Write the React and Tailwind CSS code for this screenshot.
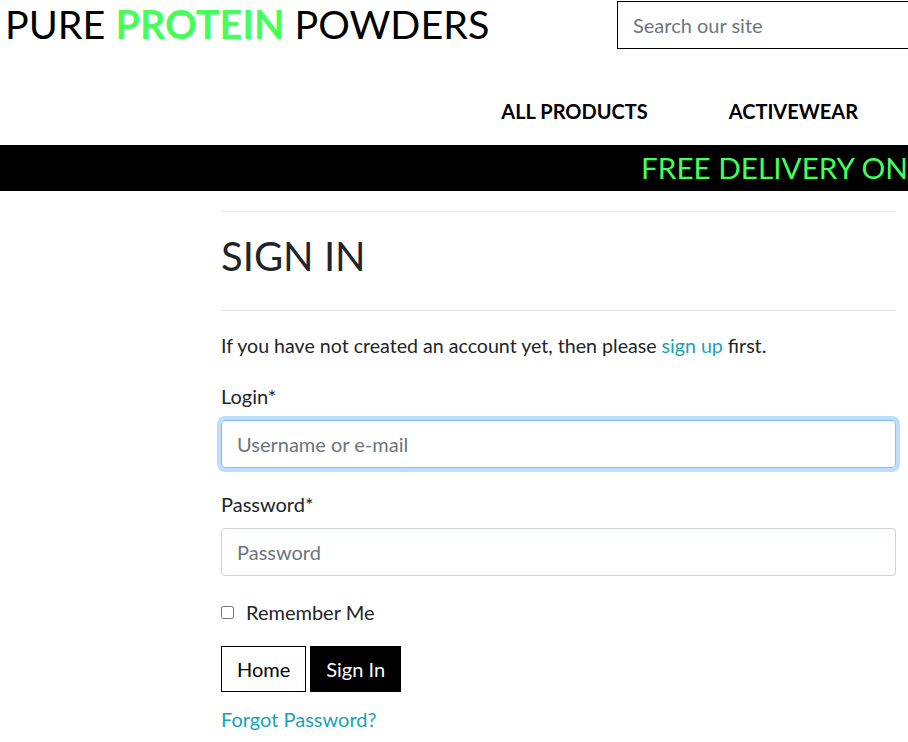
export default function App() {
  return (
    <div className="w-[908px] min-h-[742px] overflow-hidden bg-white font-['Lato','Noto_Sans',sans-serif] text-[#212529]">
      <header className="flex items-start justify-between">
        <h1 className="ml-[5px] whitespace-nowrap text-[39.5px] font-normal leading-[48px] text-black">
          PURE <span className="font-bold text-[#44ff5a]">PROTEIN</span> POWDERS
        </h1>
        <input
          type="text"
          placeholder="Search our site"
          className="mt-px h-[48px] w-[320px] shrink-0 -mr-[29px] border border-black px-[15px] text-[20px] text-[#495057] placeholder:text-[#6c757d] outline-none"
        />
      </header>
      <nav className="flex h-[96px] items-center justify-end gap-[81px] pr-[50px] pt-[27px]">
        <a className="text-[20px] font-bold text-black">ALL PRODUCTS</a>
        <a className="text-[20px] font-bold text-black">ACTIVEWEAR</a>
      </nav>
      <div className="flex h-[46px] items-center overflow-hidden bg-black">
        <span className="ml-[641px] whitespace-nowrap text-[29.7px] leading-none text-[#44ff5a]">
          FREE DELIVERY ON ORDERS
        </span>
      </div>
      <main className="ml-[221px] w-[675px]">
        <hr className="mt-[20px] border-t border-[#e5e5e5]" />
        <h2 className="mt-[20px] text-[40px] font-normal leading-[48px]">SIGN IN</h2>
        <hr className="mt-[30px] border-t border-[#e5e5e5]" />
        <p className="mt-[20px] text-[19.6px] leading-[30px]">
          If you have not created an account yet, then please{" "}
          <a className="text-[#17a2b8]">sign up</a> first.
        </p>
        <form>
          <label className="mt-[20px] block text-[20px] leading-[30px]">Login*</label>
          <input
            type="text"
            placeholder="Username or e-mail"
            className="mt-[9px] block h-[48px] w-full rounded-[4px] border border-[#80bdff] px-[15px] text-[20px] shadow-[0_0_0_4px_rgba(0,123,255,0.25)] outline-none placeholder:text-[#6c757d]"
          />
          <label className="mt-[21px] block text-[20px] leading-[30px]">Password*</label>
          <input
            type="password"
            placeholder="Password"
            className="mt-[9px] block h-[48px] w-full rounded-[4px] border border-[#ced4da] px-[15px] text-[20px] outline-none placeholder:text-[#6c757d]"
          />
          <div className="mt-[21px] flex items-center">
            <input type="checkbox" className="m-0 h-[13px] w-[13px]" />
            <span className="ml-[12px] text-[20px] leading-[30px]">Remember Me</span>
          </div>
          <div className="mt-[19px] flex gap-[4px]">
            <button type="button" className="h-[46px] border border-black bg-white px-[15px] text-[20px] text-black">
              Home
            </button>
            <button type="button" className="h-[46px] border border-black bg-black px-[15px] text-[20px] text-white">
              Sign In
            </button>
          </div>
          <a className="mt-[12px] block text-[20px] leading-[30px] text-[#17a2b8]">Forgot Password?</a>
        </form>
      </main>
    </div>
  );
}
